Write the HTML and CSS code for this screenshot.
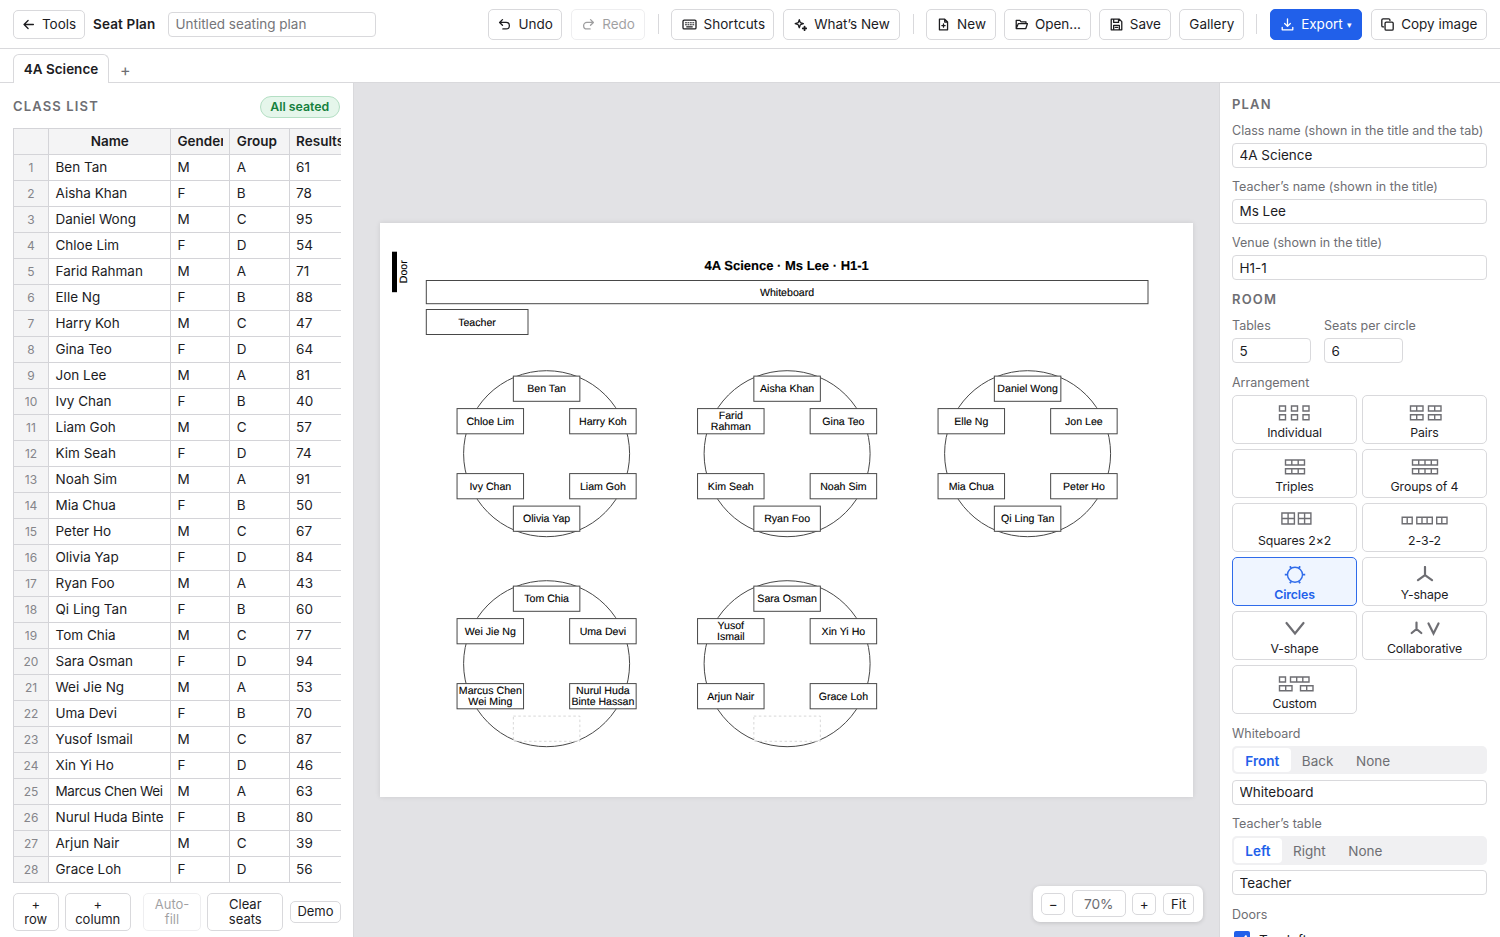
FILE: index.html
```html
<!DOCTYPE html>
<html lang="en">
<head>
<meta charset="utf-8">
<title>Seat Plan</title>
<link rel="stylesheet" href="styles.css">
</head>
<body>
<header class="topbar">
  <button class="btn btn-tools"><svg class="icon" viewBox="0 0 16 16"><path d="M14 8H2.5M7.5 3L2.5 8l5 5"/></svg>Tools</button>
  <strong class="brand">Seat Plan</strong>
  <input class="field plan-title" placeholder="Untitled seating plan">
  <div class="actions">
    <button class="btn w-undo"><svg class="icon" viewBox="0 0 16 16"><path d="M5.500 2L2 5.500 5.500 9M2 5.500h8a4 4 0 0 1 0 8H6"/></svg>Undo</button>
    <button class="btn w-undo is-disabled"><svg class="icon" viewBox="0 0 16 16"><path d="M10.500 2L14 5.500 10.500 9M14 5.500H6a4 4 0 0 0 0 8h4"/></svg>Redo</button>
    <span class="sep"></span>
    <button class="btn w-shortcuts"><svg class="icon icon-wide" viewBox="0 0 18 16"><rect x="1" y="2.500" width="16" height="11" rx="1.500"/><path d="M4 5.800h1.300M7 5.800h1.300M10 5.800h1.300M13 5.800h1.300M4 8.200h1.300M7 8.200h1.300M10 8.200h1.300M13 8.200h1.300M5.500 10.900h7" stroke-width="1.300"/></svg>Shortcuts</button>
    <button class="btn w-new-feat"><svg class="icon" viewBox="0 0 16 16"><path d="M6.500 2l1.300 3.700 3.700 1.300-3.700 1.300-1.300 3.700-1.300-3.700L1.500 7l3.700-1.300z"/><path d="M13 10.500v4.500M10.800 12.800h4.400" stroke-width="2.200"/></svg>What’s New</button>
    <span class="sep"></span>
    <button class="btn w-new"><svg class="icon" viewBox="0 0 16 16"><path d="M3 1.500h6.500L13 5v9.500H3zM9.500 1.500V5H13M8 7.300v4M6 9.300h4"/></svg>New</button>
    <button class="btn w-open"><svg class="icon" viewBox="0 0 16 16"><path d="M1.500 13V3h4.500l1.500 1.700h6V7M1.500 13L4 7h11.300l-2 6z"/></svg>Open...</button>
    <button class="btn w-save"><svg class="icon" viewBox="0 0 16 16"><path d="M1.500 1.500h10L14.500 4.500v10h-13zM4.500 1.800V5.500h6V1.800M4.500 14V9h7v5M6.500 11.500h3"/></svg>Save</button>
    <button class="btn w-gallery">Gallery</button>
    <span class="sep"></span>
    <button class="btn btn-primary"><svg class="icon" viewBox="0 0 16 16"><path d="M8 1v9M4.500 6.800L8 10.300l3.500-3.500M1.500 11.500v3h13v-3"/></svg><span>Export <small class="caret">▾</small></span></button>
    <button class="btn w-copy"><svg class="icon" viewBox="0 0 16 16"><rect x="5" y="5" width="10" height="10" rx="1.500"/><path d="M3.200 11H2.500A1.500 1.500 0 0 1 1 9.500v-7A1.500 1.500 0 0 1 2.500 1h7A1.500 1.500 0 0 1 11 2.500v.7"/></svg>Copy image</button>
  </div>
</header>
<nav class="tabs">
  <span class="tab">4A Science</span>
  <span class="tab-add">+</span>
</nav>
<main class="workspace">
  <section class="roster">
    <div class="roster-head"><h2>CLASS LIST</h2><span class="badge">All seated</span></div>
    <div class="table-wrap">
      <table>
        <colgroup><col class="c-num"><col class="c-name"><col class="c-gender"><col class="c-group"><col class="c-results"></colgroup>
        <thead><tr><th></th><th class="th-name">Name</th><th><div>Gender</div></th><th>Group</th><th>Results</th></tr></thead>
        <tbody>
        <tr><th>1</th><td>Ben Tan</td><td>M</td><td>A</td><td>61</td></tr>
        <tr><th>2</th><td>Aisha Khan</td><td>F</td><td>B</td><td>78</td></tr>
        <tr><th>3</th><td>Daniel Wong</td><td>M</td><td>C</td><td>95</td></tr>
        <tr><th>4</th><td>Chloe Lim</td><td>F</td><td>D</td><td>54</td></tr>
        <tr><th>5</th><td>Farid Rahman</td><td>M</td><td>A</td><td>71</td></tr>
        <tr><th>6</th><td>Elle Ng</td><td>F</td><td>B</td><td>88</td></tr>
        <tr><th>7</th><td>Harry Koh</td><td>M</td><td>C</td><td>47</td></tr>
        <tr><th>8</th><td>Gina Teo</td><td>F</td><td>D</td><td>64</td></tr>
        <tr><th>9</th><td>Jon Lee</td><td>M</td><td>A</td><td>81</td></tr>
        <tr><th>10</th><td>Ivy Chan</td><td>F</td><td>B</td><td>40</td></tr>
        <tr><th>11</th><td>Liam Goh</td><td>M</td><td>C</td><td>57</td></tr>
        <tr><th>12</th><td>Kim Seah</td><td>F</td><td>D</td><td>74</td></tr>
        <tr><th>13</th><td>Noah Sim</td><td>M</td><td>A</td><td>91</td></tr>
        <tr><th>14</th><td>Mia Chua</td><td>F</td><td>B</td><td>50</td></tr>
        <tr><th>15</th><td>Peter Ho</td><td>M</td><td>C</td><td>67</td></tr>
        <tr><th>16</th><td>Olivia Yap</td><td>F</td><td>D</td><td>84</td></tr>
        <tr><th>17</th><td>Ryan Foo</td><td>M</td><td>A</td><td>43</td></tr>
        <tr><th>18</th><td>Qi Ling Tan</td><td>F</td><td>B</td><td>60</td></tr>
        <tr><th>19</th><td>Tom Chia</td><td>M</td><td>C</td><td>77</td></tr>
        <tr><th>20</th><td>Sara Osman</td><td>F</td><td>D</td><td>94</td></tr>
        <tr><th>21</th><td>Wei Jie Ng</td><td>M</td><td>A</td><td>53</td></tr>
        <tr><th>22</th><td>Uma Devi</td><td>F</td><td>B</td><td>70</td></tr>
        <tr><th>23</th><td>Yusof Ismail</td><td>M</td><td>C</td><td>87</td></tr>
        <tr><th>24</th><td>Xin Yi Ho</td><td>F</td><td>D</td><td>46</td></tr>
        <tr><th>25</th><td><div class="tight">Marcus Chen Wei</div></td><td>M</td><td>A</td><td>63</td></tr>
        <tr><th>26</th><td><div>Nurul Huda Binte</div></td><td>F</td><td>B</td><td>80</td></tr>
        <tr><th>27</th><td>Arjun Nair</td><td>M</td><td>C</td><td>39</td></tr>
        <tr><th>28</th><td>Grace Loh</td><td>F</td><td>D</td><td>56</td></tr>
        </tbody>
      </table>
    </div>
    <div class="roster-actions">
      <button class="btn b-row">+<br>row</button>
      <button class="btn b-col">+<br>column</button>
      <button class="btn b-auto is-disabled">Auto-<br>fill</button>
      <button class="btn b-clear">Clear<br>seats</button>
      <button class="btn b-demo">Demo</button>
    </div>
  </section>
  <section class="stage">
    <div class="sheet">
      <svg class="plan" viewBox="0 0 813 574">
        <defs>
          <g id="ring"><circle r="83"/></g>
          <rect id="seat" x="-33.250" y="-12.600" width="66.500" height="25.200"/>
        </defs>
        <rect class="door" x="12" y="28.700" width="5" height="40.500"/>
        <text class="t" transform="translate(26.600 48.700) rotate(-90)">Door</text>
        <text class="title" x="406.700" y="47">4A Science · Ms Lee · H1-1</text>
        <rect class="box" x="46.300" y="57.500" width="721.700" height="23.200"/>
        <text class="t" x="407" y="73">Whiteboard</text>
        <rect class="box" x="46.300" y="86.500" width="101.700" height="25"/>
        <text class="t" x="97" y="102.500">Teacher</text>
        <g transform="translate(166.600 230.700)">
          <use href="#ring"/><use href="#seat" y="-65"/><use href="#seat" x="56.300" y="-32.500"/><use href="#seat" x="56.300" y="32.500"/><use href="#seat" y="65"/><use href="#seat" x="-56.300" y="32.500"/><use href="#seat" x="-56.300" y="-32.500"/>
          <text y="-61.300">Ben Tan</text><text x="56.300" y="-28.800">Harry Koh</text><text x="56.300" y="36.200">Liam Goh</text><text y="68.700">Olivia Yap</text><text x="-56.300" y="36.200">Ivy Chan</text><text x="-56.300" y="-28.800">Chloe Lim</text>
        </g>
        <g transform="translate(407.100 230.700)">
          <use href="#ring"/><use href="#seat" y="-65"/><use href="#seat" x="56.300" y="-32.500"/><use href="#seat" x="56.300" y="32.500"/><use href="#seat" y="65"/><use href="#seat" x="-56.300" y="32.500"/><use href="#seat" x="-56.300" y="-32.500"/>
          <text y="-61.300">Aisha Khan</text><text x="56.300" y="-28.800">Gina Teo</text><text x="56.300" y="36.200">Noah Sim</text><text y="68.700">Ryan Foo</text><text x="-56.300" y="36.200">Kim Seah</text><text x="-56.300" y="-35">Farid</text><text x="-56.300" y="-23.800">Rahman</text>
        </g>
        <g transform="translate(647.600 230.700)">
          <use href="#ring"/><use href="#seat" y="-65"/><use href="#seat" x="56.300" y="-32.500"/><use href="#seat" x="56.300" y="32.500"/><use href="#seat" y="65"/><use href="#seat" x="-56.300" y="32.500"/><use href="#seat" x="-56.300" y="-32.500"/>
          <text y="-61.300">Daniel Wong</text><text x="56.300" y="-28.800">Jon Lee</text><text x="56.300" y="36.200">Peter Ho</text><text y="68.700">Qi Ling Tan</text><text x="-56.300" y="36.200">Mia Chua</text><text x="-56.300" y="-28.800">Elle Ng</text>
        </g>
        <g transform="translate(166.600 440.700)">
          <use href="#ring"/><use href="#seat" y="-65"/><use href="#seat" x="56.300" y="-32.500"/><use href="#seat" x="56.300" y="32.500"/><use href="#seat" class="empty" y="65"/><use href="#seat" x="-56.300" y="32.500"/><use href="#seat" x="-56.300" y="-32.500"/>
          <text y="-61.300">Tom Chia</text><text x="56.300" y="-28.800">Uma Devi</text><text x="56.300" y="30">Nurul Huda</text><text x="56.300" y="41.200">Binte Hassan</text><text x="-56.300" y="30">Marcus Chen</text><text x="-56.300" y="41.200">Wei Ming</text><text x="-56.300" y="-28.800">Wei Jie Ng</text>
        </g>
        <g transform="translate(407.100 440.700)">
          <use href="#ring"/><use href="#seat" y="-65"/><use href="#seat" x="56.300" y="-32.500"/><use href="#seat" x="56.300" y="32.500"/><use href="#seat" class="empty" y="65"/><use href="#seat" x="-56.300" y="32.500"/><use href="#seat" x="-56.300" y="-32.500"/>
          <text y="-61.300">Sara Osman</text><text x="56.300" y="-28.800">Xin Yi Ho</text><text x="56.300" y="36.200">Grace Loh</text><text x="-56.300" y="36.200">Arjun Nair</text><text x="-56.300" y="-35">Yusof</text><text x="-56.300" y="-23.800">Ismail</text>
        </g>
      </svg>
    </div>
    <div class="zoombar">
      <button class="btn z-sm">−</button><button class="btn z-val">70%</button><button class="btn z-sm">+</button><button class="btn z-fit">Fit</button>
    </div>
  </section>
  <aside class="panel">
    <h2>PLAN</h2>
    <label>Class name (shown in the title and the tab)</label>
    <input class="field" value="4A Science">
    <label>Teacher’s name (shown in the title)</label>
    <input class="field" value="Ms Lee">
    <label>Venue (shown in the title)</label>
    <input class="field" value="H1-1">
    <h2 class="room">ROOM</h2>
    <div class="pair">
      <div><label>Tables</label><input class="field" value="5"></div>
      <div><label>Seats per circle</label><input class="field" value="6"></div>
    </div>
    <label>Arrangement</label>
    <div class="arr">
      <div class="opt"><svg viewBox="0 0 48 18"><path d="M8.500 2h6v5h-6zM20.500 2h6v5h-6zM32 2h6v5h-6zM8.500 10.700h6v5h-6zM20.500 10.700h6v5h-6zM32 10.700h6v5h-6z"/></svg>Individual</div>
      <div class="opt"><svg viewBox="0 0 48 18"><path d="M9.500 2h12.500v5H9.500zM15.700 2v5M27.500 2H40v5H27.500zM33.700 2v5M9.500 10.700h12.500v5H9.500zM15.700 10.700v5M27.500 10.700H40v5H27.500zM33.700 10.700v5"/></svg>Pairs</div>
      <div class="opt"><svg viewBox="0 0 48 18"><path d="M14.500 2h19v5h-19zM20.800 2v5M27.200 2v5M14.500 10.700h19v5h-19zM20.800 10.700v5M27.200 10.700v5"/></svg>Triples</div>
      <div class="opt"><svg viewBox="0 0 48 18"><path d="M11.500 2h25v5h-25zM17.700 2v5M24 2v5M30.300 2v5M11.500 10.700h25v5h-25zM17.700 10.700v5M24 10.700v5M30.300 10.700v5"/></svg>Groups of 4</div>
      <div class="opt"><svg viewBox="0 0 48 18"><path d="M11.500 1h12.500v11H11.500zM17.700 1v11M11.500 6.500h12.500M28 1h12.500v11H28zM34.200 1v11M28 6.500h12.500" transform="translate(-.6)"/></svg>Squares 2×2</div>
      <div class="opt"><svg viewBox="0 0 48 18"><path d="M1.200 5.200h10v6.500h-10zM6.200 5.200v6.500M15.800 5.200h15.500v6.500h-15.500zM21 5.200v6.500M26.100 5.200v6.500M35.700 5.200h10.300v6.500H35.700zM40.800 5.200v6.500"/></svg>2-3-2</div>
      <div class="opt is-on"><svg viewBox="0 0 48 18"><circle cx="24" cy="8.700" r="7.500"/><path d="M32 8.700h2.200M13.800 8.700H16M28 2L29 .2M20 2L19 .2M28 15.500l1 1.800M20 15.500l-1 1.800" stroke-width="1.800"/></svg>Circles</div>
      <div class="opt"><svg class="thick" viewBox="0 0 48 18"><path d="M24 1V9.200M24 9.200l-7 5M24 9.200l7 5"/></svg>Y-shape</div>
      <div class="opt"><svg class="thick" viewBox="0 0 48 18"><path d="M15.500 3L24 13.500l8.500-10.500"/></svg>V-shape</div>
      <div class="opt"><svg class="thick" viewBox="0 0 48 18"><path d="M15.500 2.500V9l-4.800 4M15.500 9l4.800 4M27.500 3.500L32.500 13.500l5-10"/></svg>Collaborative</div>
      <div class="opt"><svg viewBox="0 0 48 18"><path d="M8.500 2h6v5h-6zM19.500 2H38v5H19.500zM25.700 2v5M31.800 2v5M8.500 10.700h12.500v5H8.500zM14.700 10.700v5M29.500 10.700H42v5H29.500zM35.700 10.700v5"/></svg>Custom</div>
    </div>
    <label>Whiteboard</label>
    <div class="seg"><span class="on">Front</span><span>Back</span><span>None</span></div>
    <input class="field" value="Whiteboard">
    <label>Teacher’s table</label>
    <div class="seg"><span class="on">Left</span><span>Right</span><span>None</span></div>
    <input class="field" value="Teacher">
    <label>Doors</label>
    <div class="check"><svg viewBox="0 0 16 16"><rect width="16" height="16" rx="2"/><path d="M4 8.500L7 11.500 12.500 4.500"/></svg>Top left</div>
  </aside>
</main>
</body>
</html>
```

FILE: styles.css
```css
* { box-sizing: border-box; }
body {
  margin: 0;
  width: 1500px;
  height: 937px;
  overflow: hidden;
  display: flex;
  flex-direction: column;
  font: 13.5px/18px Inter, "Liberation Sans", sans-serif;
  color: #1c1c1f;
  background: #fff;
}
button, input { font: inherit; color: inherit; }
h2 { margin: 0; font-size: 13px; line-height: 18px; font-weight: 600; letter-spacing: 1.150px; color: #6e6e73; }
label { display: block; }

.topbar { height: 49px; flex: none; display: flex; align-items: center; padding: 0 13px; border-bottom: 1px solid #d9d9dc; }
.btn {
  display: flex; align-items: center; justify-content: center; gap: 7px;
  height: 31px; padding: 0; flex: none; white-space: nowrap;
  border: 1px solid #d9d9dc; border-radius: 5px; background: #fff;
}
.icon { width: 13px; height: 13px; fill: none; stroke: currentColor; stroke-width: 1.6; stroke-linecap: round; stroke-linejoin: round; }
.icon-wide { width: 15px; }
.btn-tools { width: 72px; height: 29px; }
.brand { margin-left: 8px; width: 75px; font-weight: 600; white-space: nowrap; letter-spacing: .15px; }
.field { display: block; width: 100%; height: 25px; padding: 0 6.500px; border: 1px solid #d9d9dc; border-radius: 4px; background: #fff; outline: 0; }
.field::placeholder { color: #757579; }
.plan-title { width: 208px; }
.actions { margin-left: auto; display: flex; align-items: center; gap: 8.430px; }
.topbar .actions .btn { padding-left: 1px; }
.sep { width: 1px; height: 20px; margin: 0 4.100px; background: #d9d9dc; }
.is-disabled { opacity: .42; }
.w-undo { width: 74.500px; }
.w-shortcuts { width: 103px; }
.w-new-feat { width: 117.500px; }
.w-new { width: 69.500px; }
.w-open { width: 86.500px; }
.w-save { width: 71.500px; }
.w-gallery { width: 64.500px; }
.btn-primary { width: 92.500px; background: #2160ea; border-color: #2160ea; color: #fff; }
.caret { font-size: 9px; vertical-align: 1px; }
.w-copy { width: 116.500px; }

.tabs { height: 34px; flex: none; display: flex; align-items: flex-end; padding-left: 13px; border-bottom: 1px solid #d9d9dc; }
.tab { width: 96px; height: 29px; margin-bottom: -1px; border: 1px solid #d9d9dc; border-bottom: 0; border-radius: 6px 6px 0 0; background: #fff; font-weight: 600; text-align: center; line-height: 29px; }
.tab-add { margin: 0 0 1px 11px; font-size: 16px; line-height: 22px; color: #6e6e73; }

.workspace { flex: 1; min-height: 0; display: flex; }
.roster { width: 354px; padding: 13px 13px 0; border-right: 1px solid #d9d9dc; }
.roster-head { display: flex; justify-content: space-between; height: 31.500px; }
.roster-head h2 { line-height: 21px; }
.badge { width: 80.500px; height: 21.500px; border: 1px solid #b4dfc4; border-radius: 11px; background: #e5f6eb; color: #15803d; font-size: 12.300px; font-weight: 600; line-height: 20px; text-align: center; }
.table-wrap { width: 328px; height: 756px; overflow: hidden; }
table { width: 360px; table-layout: fixed; border-collapse: collapse; }
.c-num { width: 35px; }
.c-name { width: 122px; }
.c-gender, .c-group { width: 59.300px; }
th, td { height: 26px; padding: 0 6px 0 6.500px; border: 1px solid #d4d4d8; text-align: left; font-weight: 400; white-space: nowrap; overflow: hidden; line-height: 18px; }
td div, th div { overflow: hidden; }
.tight { letter-spacing: -.35px; }
thead th { background: #f4f4f5; font-weight: 600; }
thead .th-name { text-align: center; }
tbody th { padding: 1px 0 0; background: #f4f4f5; color: #85858a; font-size: 12px; text-align: center; }
.roster-actions { display: flex; align-items: center; margin-top: 9.500px; height: 38px; }
.roster-actions .btn { height: 37.500px; font-size: 13px; line-height: 15.500px; }
.roster-actions .b-row { width: 45.500px; }
.roster-actions .b-col { width: 65.500px; margin-left: 6.500px; }
.roster-actions .b-auto { width: 58px; margin-left: 12.500px; }
.roster-actions .b-clear { width: 76px; margin-left: 6.300px; }
.roster-actions .b-demo { width: 51px; height: 22px; margin-left: 6.700px; }

.stage { position: relative; flex: 1; display: flex; align-items: center; justify-content: center; background: #e2e2e5; }
.sheet { width: 813px; height: 574px; background: #fff; box-shadow: 0 0 5px rgba(0, 0, 0, .1); }
.plan { display: block; width: 813px; height: 574px; fill: none; stroke: #484848; stroke-width: 1; font-family: "Liberation Sans", Arial, sans-serif; }
.plan text { fill: #000; stroke: #000; stroke-width: .12px; font-size: 10.600px; text-anchor: middle; text-rendering: geometricPrecision; }
.plan .title { font-size: 13px; font-weight: 700; }
.plan .box { fill: none; }
#seat { fill: #fff; }
.plan .door { fill: #000; stroke: none; }
.plan .empty { stroke: #cfcfcf; stroke-dasharray: 2.500 2.500; opacity: .8; }
.zoombar { position: absolute; right: 16px; bottom: 15.500px; width: 170px; height: 36px; display: flex; align-items: center; gap: 6.500px; padding: 0 8px; border-radius: 7px; background: #fff; box-shadow: 0 1px 4px rgba(0, 0, 0, .15); }
.zoombar .z-sm { width: 24.200px; height: 22px; }
.zoombar .z-val { width: 54px; height: 27px; color: #6e6e73; font-size: 13.700px; }
.zoombar .z-fit { width: 31.500px; height: 22px; font-size: 13px; }

.panel { width: 281px; padding: 11.700px 13px 0 12px; border-left: 1px solid #d9d9dc; overflow: hidden; }
.panel label { height: 18px; margin: 9.300px 0 4px; font-size: 12.500px; line-height: 19.500px; color: #6e6e73; white-space: nowrap; }
.panel h2 + label { margin-top: 8px; }
.panel .room { margin-top: 10px; }
.pair { display: flex; gap: 13px; }
.pair > div { width: 79px; }
.pair label { margin-top: 8px; line-height: 20.500px; }
.arr { display: grid; grid-template-columns: 1fr 1fr; gap: 5px; }
.opt { height: 49.130px; display: flex; flex-direction: column; align-items: center; padding-top: 8.300px; border: 1px solid #d9d9dc; border-radius: 5px; font-size: 12.300px; line-height: 21px; letter-spacing: -.1px; }
.opt svg { width: 48px; height: 18px; flex: none; fill: none; stroke: #6e6e73; stroke-width: 1.400; }
.opt .thick { stroke-width: 2.200; stroke-linecap: round; }
.opt.is-on { border-color: #2f6bea; background: #eff5ff; color: #2160ea; font-weight: 600; }
.opt.is-on svg { stroke: #2f6bea; }
.seg { display: flex; height: 28.600px; margin-bottom: 5.700px; padding: 2px; border-radius: 5px; background: #f0f0f2; color: #6e6e73; }
.seg span { padding: 0 11.300px; line-height: 26px; border-radius: 4px; }
.seg .on { background: #fff; color: #2160ea; font-weight: 600; }
.check { display: flex; gap: 9px; padding-left: 2px; margin-top: 4px; line-height: 26px; }
.check svg { width: 16px; height: 16px; margin-top: 4px; fill: #2160ea; }
.check path { fill: none; stroke: #fff; stroke-width: 2; }
```
